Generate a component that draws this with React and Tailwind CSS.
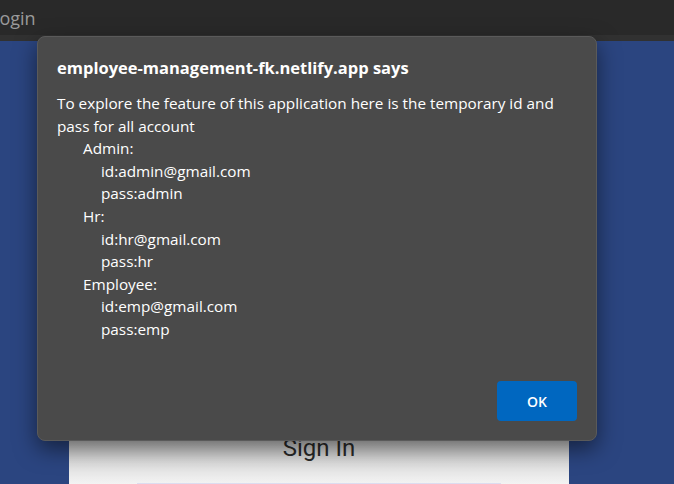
import React from "react";

const lines = [
  { text: "Admin:", indent: "pl-[26px]" },
  { text: "id:admin@gmail.com", indent: "pl-[44px]" },
  { text: "pass:admin", indent: "pl-[44px]" },
  { text: "Hr:", indent: "pl-[26px]" },
  { text: "id:hr@gmail.com", indent: "pl-[44px]" },
  { text: "pass:hr", indent: "pl-[44px]" },
  { text: "Employee:", indent: "pl-[26px]" },
  { text: "id:emp@gmail.com", indent: "pl-[44px]" },
  { text: "pass:emp", indent: "pl-[44px]" },
];

export default function App() {
  return (
    <div className="relative w-[674px] h-[484px] overflow-hidden bg-[#2b4580] font-['Open_Sans',sans-serif]">
      {/* browser tab strip */}
      <div className="h-[35px] bg-[#292929] flex items-center">
        <span className="text-[18px] text-[#9a9a9a] -ml-[10px] leading-none">Login</span>
      </div>
      <div className="h-[6px] bg-[#313131]" />

      {/* page behind */}
      <div className="flex justify-start pl-[69px]">
        <div className="w-[500px] h-[443px] bg-gradient-to-b from-[#c9c9c9] from-[90%] to-[#f3f3f3] flex flex-col items-center justify-end">
          <div className="text-[24px] text-[#2a2a2a] font-['Roboto',sans-serif] leading-none mb-[23px]">Sign In</div>
          <div className="w-[364px] h-[1px] bg-[#dcdcf0]" />
        </div>
      </div>

      {/* alert dialog */}
      <div className="absolute left-[37px] top-[36px] w-[560px] h-[405px] bg-[#4a4a4a] border border-[#5a5a5a] rounded-[8px] shadow-[0_8px_22px_rgba(0,0,0,0.5)] text-white flex flex-col">
        <div className="pl-[19px] pr-[16px] pt-[19px]">
          <div className="text-[16.5px] font-bold leading-[24px]">employee-management-fk.netlify.app says</div>
          <div className="mt-[12px] text-[15.3px] leading-[22.6px]">
            <div>To explore the feature of this application here is the temporary id and pass for all account</div>
            {lines.map((l, i) => (
              <div key={i} className={l.indent}>{l.text}</div>
            ))}
          </div>
        </div>
        <div className="mt-auto flex justify-end pr-[19px] pb-[19px]">
          <button className="w-[80px] h-[40px] rounded-[4px] bg-[#0067c0] text-white text-[14px] font-semibold">OK</button>
        </div>
      </div>
    </div>
  );
}
